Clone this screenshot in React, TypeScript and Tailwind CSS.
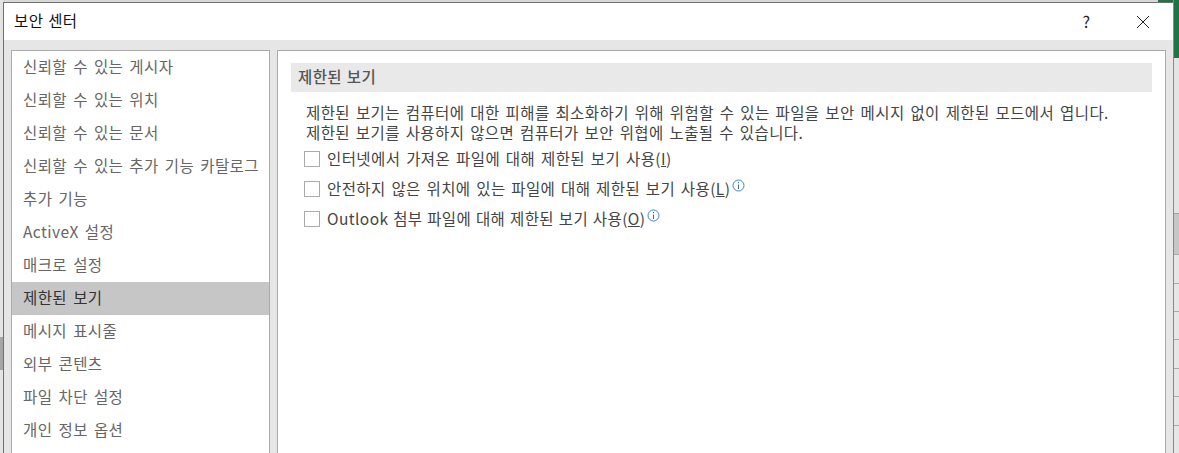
const menuItems = [
  '신뢰할 수 있는 게시자',
  '신뢰할 수 있는 위치',
  '신뢰할 수 있는 문서',
  '신뢰할 수 있는 추가 기능 카탈로그',
  '추가 기능',
  'ActiveX 설정',
  '매크로 설정',
  '제한된 보기',
  '메시지 표시줄',
  '외부 콘텐츠',
  '파일 차단 설정',
  '개인 정보 옵션',
];

const font = "font-['Noto_Sans_CJK_KR','Noto_Sans',sans-serif]";

function InfoIcon() {
  return (
    <svg width="13" height="13" viewBox="0 0 13 13" className="ml-[2px] mb-[6px] shrink-0" fill="none">
      <circle cx="6.5" cy="6.5" r="5.5" stroke="#3f83cc" strokeWidth="1" />
      <path d="M6.5 5.5V10" stroke="#3f6a9c" strokeWidth="1" />
      <path d="M6.5 3V4.2" stroke="#3f6a9c" strokeWidth="1" />
    </svg>
  );
}

function Option({ label, hotkey, info, className }: { label: string; hotkey: string; info?: boolean; className: string }) {
  return (
    <div className={`flex items-center h-[20px] ${className}`}>
      <span className="w-[16px] h-[16px] mt-[2px] border border-[#ababab] bg-white shrink-0" />
      <span className="ml-[7px] text-[15.5px] leading-[20px] tracking-[0.42px] text-[#444] whitespace-nowrap">
        {label}(<span className="underline">{hotkey}</span>)
      </span>
      {info && <InfoIcon />}
    </div>
  );
}

export default function App() {
  return (
    <div className={`flex w-[1179px] h-[453px] overflow-hidden bg-[#e6e6e6] ${font}`}>
      <div className="w-[3px] flex flex-col bg-[#e4e4e4]">
        <div className="h-[337px]" />
        <div className="h-[33px] bg-[#a6a6a6]" />
      </div>
      <div className="flex-1 flex flex-col">
        <div className="h-[2px] shrink-0 flex bg-[#d8d8d8]">
          <div className="ml-auto w-[15px] bg-[#217346]" />
        </div>
        <div className="flex-1 flex flex-col border-t border-l border-[#6f6f6f] min-h-0">
          <div className="h-[37px] shrink-0 bg-white flex items-center pl-[10px] pr-[23px] pb-[2px]">
            <span className="text-[15.5px] tracking-[0.4px] [word-spacing:1px] text-[#111]">보안 센터</span>
            <span className="ml-auto text-[16px] text-[#222]">?</span>
            <svg width="14" height="14" viewBox="0 0 14 14" className="ml-[46px] mt-[2px]" fill="none">
              <path d="M1 1L13 13M13 1L1 13" stroke="#222" strokeWidth="1" />
            </svg>
          </div>
          <div className="flex-1 min-h-0 flex bg-[#e6e6e6] pt-[10px] pl-[7px] pr-[7px] gap-[7px]">
            <div className="w-[259px] h-[420px] shrink-0 bg-white border border-[#ababab]">
              {menuItems.map((item) => (
                <div
                  key={item}
                  className={`h-[33px] pl-[11px] pb-[2px] flex items-center text-[15.5px] tracking-[0.42px] [word-spacing:2.2px] whitespace-nowrap ${
                    item === '제한된 보기' ? 'bg-[#c6c6c6] text-[#333]' : 'text-[#666]'
                  }`}
                >
                  {item}
                </div>
              ))}
            </div>
            <div className="flex-1 h-[420px] bg-white border border-[#ababab] pt-[12px] pl-[13px] pr-[13px]">
              <div className="h-[29px] bg-[#e9e9e9] pl-[7px] pb-[2px] flex items-center text-[15.5px] font-medium tracking-[0.4px] [word-spacing:1px] text-[#555]">
                제한된 보기
              </div>
              <div className="pl-[15px] pt-[10px] text-[15.5px] leading-[20px] tracking-[0.42px] text-[#444] whitespace-nowrap">
                <p className="[word-spacing:1.95px]">제한된 보기는 컴퓨터에 대한 피해를 최소화하기 위해 위험할 수 있는 파일을 보안 메시지 없이 제한된 모드에서 엽니다.</p>
                <p className="[word-spacing:1.9px]">제한된 보기를 사용하지 않으면 컴퓨터가 보안 위협에 노출될 수 있습니다.</p>
              </div>
              <div className="pl-[13px]">
                <Option className="mt-[6px] [word-spacing:1.9px]" label="인터넷에서 가져온 파일에 대해 제한된 보기 사용" hotkey="I" />
                <Option className="mt-[10px] [word-spacing:1.8px]" label="안전하지 않은 위치에 있는 파일에 대해 제한된 보기 사용" hotkey="L" info />
                <Option className="mt-[10px] [word-spacing:0.8px]" label="Outlook 첨부 파일에 대해 제한된 보기 사용" hotkey="O" info />
              </div>
            </div>
          </div>
        </div>
      </div>
      <div className="w-[6px] shrink-0 flex flex-col border-l border-[#8a8a8a]">
        <div className="h-[59px] bg-[#217346]" />
        <div className="h-[159px] bg-[#e4e4e4]" />
        <div className="h-[42px] bg-[#c6c6c6] border-t border-[#a0a0a0]" />
        {[0, 1, 2, 3, 4, 5, 6].map((i) => (
          <div key={i} className="h-[29px] bg-[#e6e6e6] border-t border-[#aaaaaa]" />
        ))}
      </div>
    </div>
  );
}
